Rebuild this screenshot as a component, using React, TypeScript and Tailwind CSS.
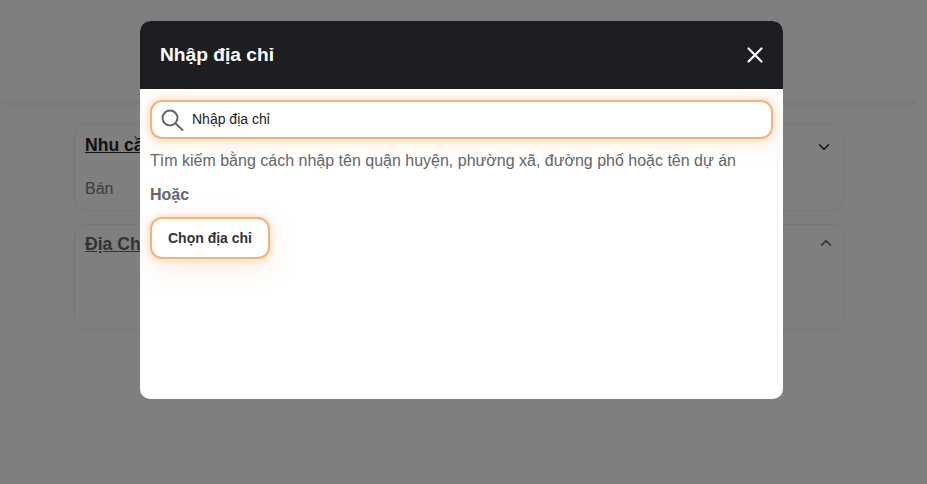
import { ChevronDown, ChevronUp, X } from "lucide-react";

function Section({ title, children, open, faded }: { title: string; children?: React.ReactNode; open?: boolean; faded?: boolean }) {
  return (
    <div className={`ml-[74px] mr-[83px] mb-[13px] rounded-xl border border-[#f0f0f0] pl-[10px] ${open ? "pr-[8px] pt-[5px]" : "pr-[10px] pt-[7px]"}`}>
      <div className="flex items-center justify-between">
        <span className={`text-[17.6px] leading-[28px] font-bold underline ${faded ? "text-[#666]" : "text-[#222]"}`}>{title}</span>
        {open ? (
          <ChevronUp className="mb-[2px] h-[18px] w-[18px] text-[#555]" />
        ) : (
          <ChevronDown className="mt-[4px] h-[18px] w-[18px] text-[#222]" />
        )}
      </div>
      {children}
    </div>
  );
}

export default function App() {
  return (
    <div className="relative h-[484px] w-[927px] overflow-hidden bg-white font-['Liberation_Sans',sans-serif]">
      <div className="pt-[101px]">
        <div className="ml-[2px] mr-[10px] mb-[18px] h-[4px] rounded-full bg-[#f4f4f4]" />
        <Section title="Nhu cầu">
          <div className="pt-[18px] pb-[9px] text-[16px] leading-[24px] text-[#777]">Bán</div>
        </Section>
        <Section title="Địa Chỉ" open faded>
          <div className="h-[71px]" />
        </Section>
      </div>

      <div className="absolute inset-0 bg-black/50" />

      <div className="absolute left-[140px] top-[21px] h-[378px] w-[643px] overflow-hidden rounded-[10px] bg-white">
        <div className="flex h-[68px] items-center justify-between bg-[#1c1e21] pl-[20px] pr-[15px]">
          <span className="text-[19.2px] font-bold text-white">Nhập địa chỉ</span>
          <X className="h-[26px] w-[26px] text-white" strokeWidth={2} />
        </div>
        <div className="px-[10px] pt-[11px]">
          <div className="flex h-[39px] items-center rounded-[12px] border-2 border-[#f5b176] bg-white pl-[8px] shadow-[0_0_6px_3px_rgba(245,177,118,0.3),0_6px_24px_rgba(245,177,118,0.16)]">
            <svg viewBox="0 0 24 24" className="h-[24px] w-[24px]" fill="none" stroke="#666" strokeWidth="2" strokeLinecap="round">
              <circle cx="10" cy="10" r="7.5" />
              <path d="M15.6 15.6 22.5 22" />
            </svg>
            <span className="ml-[8px] text-[14px] text-[#222]">Nhập địa chỉ</span>
          </div>
          <p className="mt-[11px] text-[16px] leading-[22px] text-[#666]">
            Tìm kiếm bằng cách nhập tên quận huyện, phường xã, đường phố hoặc tên dự án
          </p>
          <p className="mt-[12px] text-[16px] leading-[22px] font-bold text-[#666]">Hoặc</p>
          <div className="mt-[11px] flex h-[42px] w-[120px] items-center justify-center rounded-[12px] border-2 border-[#f5b176] bg-white text-[14px] font-bold text-[#333] shadow-[0_0_5px_2px_rgba(245,177,118,0.3),0_8px_24px_rgba(245,177,118,0.25)]">
            Chọn địa chỉ
          </div>
        </div>
      </div>
    </div>
  );
}
